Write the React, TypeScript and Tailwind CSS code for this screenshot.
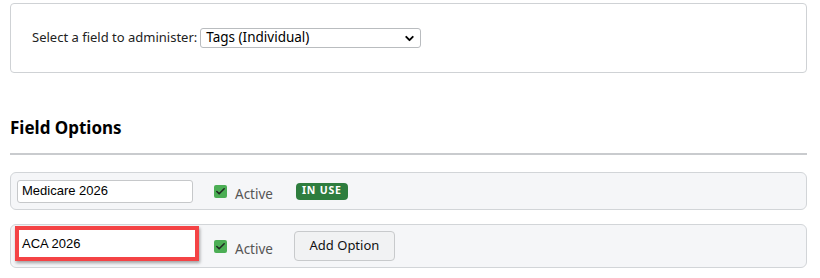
import { Check, ChevronDown } from 'lucide-react'

const ui = { fontFamily: '"Noto Sans", "Open Sans", sans-serif' }
const arial = { fontFamily: '"Liberation Sans", Arial, sans-serif' }

function ActiveBox({ ml }: { ml: string }) {
  return (
    <label className={`flex items-center gap-[8px] ${ml}`}>
      <span className="w-[13px] h-[13px] rounded-[2px] bg-[#4cae55] flex items-center justify-center">
        <Check size={11} strokeWidth={3.5} className="text-[#1f2a22]" />
      </span>
      <span className="text-[13.5px] text-[#555] mt-[6px]">Active</span>
    </label>
  )
}

export default function App() {
  return (
    <div className="w-[820px] pl-[10px] pr-[13px] pt-[3px] text-[#222]" style={ui}>
      {/* selector */}
      <div className="h-[70px] border border-[#cfd2d5] rounded-[4px] flex items-center pl-[21px]">
        <span className="text-[13px] text-[#222]">Select a field to administer:</span>
        <div className="ml-[3px] w-[221px] h-[20px] border border-[#b9bcbf] rounded-[3px] bg-white flex items-center pl-[5px] pr-[4px]">
          <span className="flex-1 text-[13.5px] text-black leading-none">Tags (Individual)</span>
          <ChevronDown size={13} strokeWidth={3.5} className="text-black" />
        </div>
      </div>

      {/* heading */}
      <div className="mt-[43px] text-[17px] font-bold text-black leading-[24px]">Field Options</div>
      <div className="mt-[13px] h-[2px] bg-[#c9cbce]" />

      {/* options */}
      <div className="mt-[17px] flex flex-col gap-[14px]">
        <div className="h-[38px] bg-[#f5f6f8] border border-[#d2d5d8] rounded-[6px] flex items-center pl-[6px]">
          <div className="w-[176px] h-[23px] bg-white border border-[#c6c8ca] rounded-[3px] flex items-center pl-[4px] text-[13px] text-black" style={arial}>
            Medicare 2026
          </div>
          <ActiveBox ml="ml-[21px]" />
          <span className="ml-[23px] h-[17px] px-[6px] rounded-[4px] bg-[#2e7d3e] text-white text-[10.5px] font-bold tracking-[0.8px] flex items-center">
            IN USE
          </span>
        </div>

        <div className="h-[44px] bg-[#f5f6f8] border border-[#d2d5d8] rounded-[6px] flex items-center pl-[4px]">
          <div className="w-[184px] h-[35px] border-[4px] border-[#f44345] shadow-[1px_2px_3px_rgba(0,0,0,0.35)] bg-white flex items-center pl-[3px] text-[13px] text-black mb-[5px]" style={arial}>
            ACA 2026
          </div>
          <ActiveBox ml="ml-[15px]" />
          <button className="ml-[21px] w-[101px] h-[30px] rounded-[4px] border border-[#c8cacc] bg-[#f1f2f3] text-[13px] text-[#111]" style={ui}>
            Add Option
          </button>
        </div>
      </div>
    </div>
  )
}
